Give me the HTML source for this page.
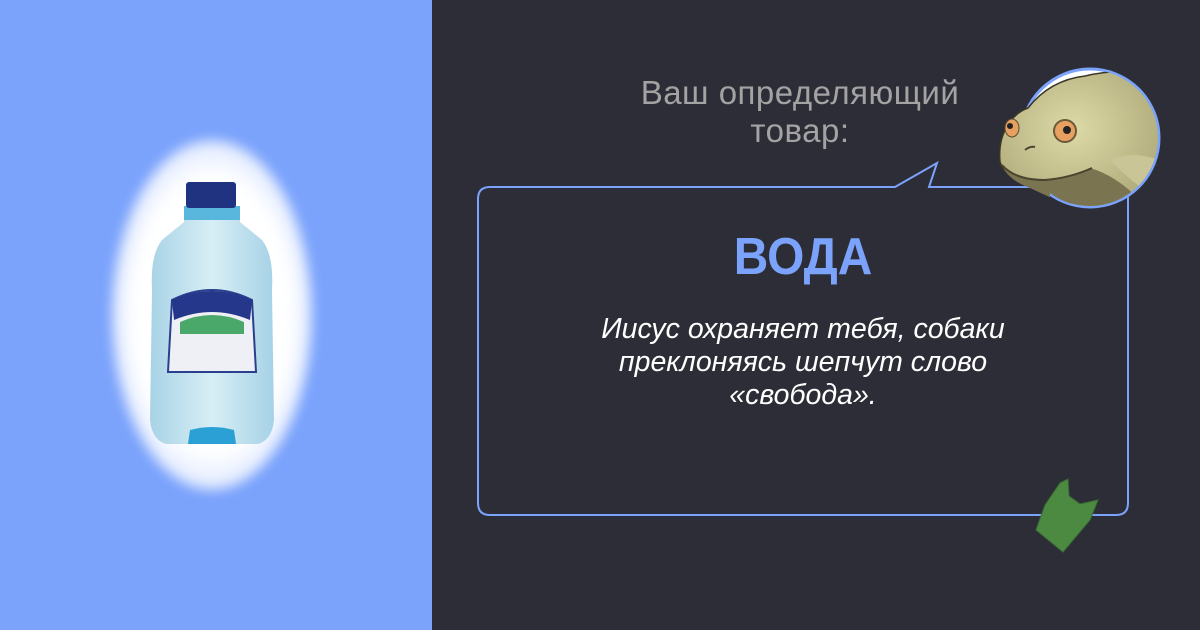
<!DOCTYPE html>
<html><head><meta charset="utf-8"><style>
html,body{margin:0;padding:0}
body{width:1200px;height:630px;position:relative;overflow:hidden;background:#2d2d38;font-family:"Liberation Sans",sans-serif}
#left{position:absolute;left:0;top:0;width:432px;height:630px;background:#7ba3fc;overflow:hidden}
#glow{position:absolute;left:112px;top:140px;width:200px;height:350px;border-radius:50%;background:radial-gradient(ellipse at center,#fff 55%,rgba(255,255,255,0.85) 65%,rgba(255,255,255,0) 100%);filter:blur(6px)}
.t{position:absolute;left:478px;width:650px;text-align:center}
#h{top:74px;color:#a3a3a3;font-size:33px;line-height:38px;letter-spacing:0.5px;left:480px;width:640px}
#v{top:227px;color:#7ba3fc;font-size:52px;font-weight:bold;line-height:60px;transform:scaleX(0.92)}
#d{top:313px;color:#fff;font-size:28.5px;font-style:italic;line-height:33px}
</style></head><body>
<div id="left"><div id="glow"></div>
<svg width="432" height="630" style="position:absolute;left:0;top:0">
<defs><linearGradient id="bg" x1="0" x2="1"><stop offset="0" stop-color="#a8d3e6"/><stop offset="0.5" stop-color="#d7eef5"/><stop offset="1" stop-color="#a6d2e6"/></linearGradient></defs>
<path d="M186,208 L238,208 L240,222 L262,240 Q274,255 272,290 L274,420 Q272,440 258,444 L166,444 Q152,440 150,420 L152,290 Q150,255 162,240 L184,222 Z" fill="url(#bg)"/>
<rect x="184" y="206" width="56" height="14" fill="#59b7de"/>
<rect x="186" y="182" width="50" height="26" rx="3" fill="#1f3380"/>
<path d="M172,300 Q212,280 252,300 L256,372 L168,372 Z" fill="#eef0f6" stroke="#2a3f8d" stroke-width="2"/>
<path d="M172,300 Q212,282 252,300 L250,320 Q212,304 174,320 Z" fill="#24378a"/>
<path d="M180,322 Q212,308 244,322 L244,334 L180,334 Z" fill="#4aa86a"/>
<path d="M190,430 Q212,424 234,430 L236,444 L188,444 Z" fill="#2aa0d4"/>
</svg></div>

<div class="t" id="h">Ваш определяющий<br>товар:</div>

<svg width="1200" height="630" style="position:absolute;left:0;top:0">
<path d="M895,187 L937,163 L929,187 L1116,187 Q1128,187 1128,199 L1128,503 Q1128,515 1116,515 L490,515 Q478,515 478,503 L478,199 Q478,187 490,187 Z" fill="none" stroke="#7ba3fc" stroke-width="2"/>
<defs>
<clipPath id="fc"><circle cx="1090" cy="138" r="68"/><rect x="990" y="100" width="60" height="110"/></clipPath>
<radialGradient id="fg" cx="0.45" cy="0.4" r="0.7"><stop offset="0" stop-color="#dedaa8"/><stop offset="1" stop-color="#a7a372"/></radialGradient>
</defs>
<circle cx="1090" cy="138" r="69" fill="#fff"/>
<circle cx="1090" cy="138" r="69" fill="none" stroke="#7ba3fc" stroke-width="3"/>
<g clip-path="url(#fc)">
<path d="M1028,108 Q1050,80 1085,76 Q1110,70 1135,72 Q1150,76 1162,86 L1162,215 L1090,212 Q1060,200 1030,185 Q1005,178 1000,162 Q998,140 1008,125 Q1016,112 1028,108 Z" fill="url(#fg)" stroke="#3a3624" stroke-width="1.5"/>
<path d="M1002,165 Q1015,180 1045,180 Q1070,178 1090,168 Q1115,175 1140,200 L1160,215 L1085,212 Q1055,200 1030,188 Q1008,180 1002,165 Z" fill="#7a7450"/>
<path d="M1002,165 Q1015,180 1045,180 Q1070,178 1092,168" stroke="#4a4530" stroke-width="2" fill="none"/>
<path d="M1110,160 Q1130,150 1160,160 L1160,200 Q1140,190 1110,160 Z" fill="#c9c596"/>
</g>
<circle cx="1065" cy="131" r="11" fill="#e8a060" stroke="#6b5a3a" stroke-width="2"/><circle cx="1067" cy="130" r="4" fill="#222"/>
<ellipse cx="1012" cy="128" rx="7" ry="9" fill="#e8a060" stroke="#5a4a30" stroke-width="1"/><circle cx="1010" cy="126" r="3" fill="#222"/>
<path d="M1025,150 Q1030,146 1035,147" stroke="#4a4530" stroke-width="2" fill="none"/>
<path d="M1060,483 L1068,479 L1069,496 L1080,504 L1098,500 L1090,520 L1063,552 L1036,530 L1045,505 Z" fill="#4c8a42" stroke="#3a6f33" stroke-width="1"/>
</svg>

<div class="t" id="v">ВОДА</div>
<div class="t" id="d">Иисус охраняет тебя, собаки<br>преклоняясь шепчут слово<br>«свобода».</div>
</body></html>
